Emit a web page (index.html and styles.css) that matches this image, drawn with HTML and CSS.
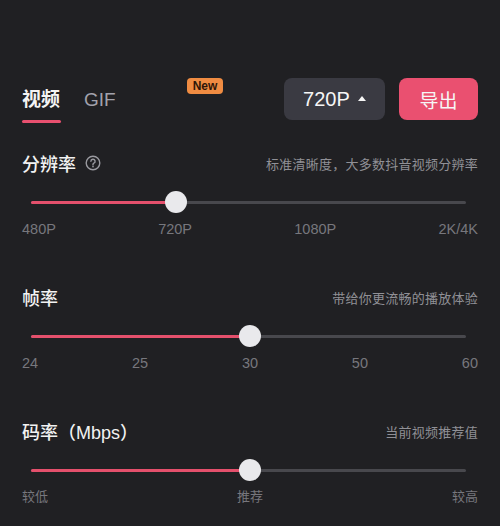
FILE: index.html
```html
<!DOCTYPE html>
<html lang="zh-CN">
<head>
    <meta charset="UTF-8">
    <meta name="viewport" content="width=device-width, initial-scale=1.0">
    <title>导出设置</title>
    <link rel="stylesheet" href="styles.css">
</head>
<body>
    <div class="topbar">
        <div class="tab active">视频</div>
        <div class="tab">GIF</div>
        <div class="badge">New</div>
        <button class="btn res-btn">720P <span class="caret"></span></button>
        <button class="btn export-btn">导出</button>
    </div>

    <div class="setting">
        <div class="setting-head">
            <div class="setting-title">分辨率
                <svg class="help" width="16" height="16" viewBox="0 0 16 16">
                    <circle cx="8" cy="8" r="6.8" fill="none" stroke="#9a9aa0" stroke-width="1.4"/>
                    <path d="M5.9 6.3a2.1 2.1 0 1 1 3 1.9c-.6.3-.9.7-.9 1.3v.4" fill="none" stroke="#9a9aa0" stroke-width="1.4" stroke-linecap="round"/>
                    <circle cx="8" cy="11.6" r="0.85" fill="#9a9aa0"/>
                </svg>
            </div>
            <div class="setting-desc">标准清晰度，大多数抖音视频分辨率</div>
        </div>
        <div class="slider">
            <div class="track">
                <div class="fill" style="width: 33.4%"></div>
                <div class="thumb" style="left: 33.4%"></div>
            </div>
        </div>
        <div class="ticks">
            <span>480P</span><span>720P</span><span>1080P</span><span>2K/4K</span>
        </div>
    </div>

    <div class="setting">
        <div class="setting-head">
            <div class="setting-title">帧率</div>
            <div class="setting-desc">带给你更流畅的播放体验</div>
        </div>
        <div class="slider">
            <div class="track">
                <div class="fill" style="width: 50.3%"></div>
                <div class="thumb" style="left: 50.3%"></div>
            </div>
        </div>
        <div class="ticks">
            <span>24</span><span>25</span><span>30</span><span>50</span><span>60</span>
        </div>
    </div>

    <div class="setting">
        <div class="setting-head">
            <div class="setting-title">码率（Mbps）</div>
            <div class="setting-desc">当前视频推荐值</div>
        </div>
        <div class="slider">
            <div class="track">
                <div class="fill" style="width: 50.3%"></div>
                <div class="thumb" style="left: 50.3%"></div>
            </div>
        </div>
        <div class="ticks cjk">
            <span>较低</span><span>推荐</span><span>较高</span>
        </div>
    </div>
</body>
</html>
```

FILE: styles.css
```css
body {
    margin: 0;
    padding: 0 22px;
    background-color: #202023;
    color: #f2f2f2;
    font-family: "Liberation Sans", "Noto Sans CJK SC", sans-serif;
}
.topbar {
    display: flex;
    align-items: flex-start;
    margin-top: 78px;
    height: 45px;
}
.tab {
    margin-top: 8px;
    font-size: 19px;
    line-height: 28px;
    font-weight: 500;
    color: #a2a2ac;
    margin-right: 23px;
}
.tab.active {
    color: #f4f4f4;
    font-weight: bold;
}
.tab.active::after {
    content: "";
    display: block;
    width: 39px;
    height: 3px;
    margin-top: 6px;
    border-radius: 2px;
    background-color: #e8506f;
}
.badge {
    margin-left: 48px;
    padding: 0 6px;
    height: 16px;
    line-height: 16px;
    border-radius: 4px;
    background-color: #f08c42;
    color: #2e1608;
    font-size: 12px;
    font-weight: bold;
}
.btn {
    height: 42px;
    border: none;
    border-radius: 8px;
    color: #f6f6f6;
    font-family: inherit;
    font-size: 19px;
    padding: 0;
}
.res-btn {
    margin-left: auto;
    width: 101px;
    background-color: #3a3a42;
    font-size: 20px;
}
.caret {
    display: inline-block;
    vertical-align: middle;
    margin-left: 3px;
    margin-top: -4px;
    border-left: 4px solid transparent;
    border-right: 4px solid transparent;
    border-bottom: 5px solid #f6f6f6;
}
.export-btn {
    margin-left: 14px;
    width: 79px;
    background-color: #ea5070;
}
.setting {
    margin-top: 26px;
    margin-bottom: 45px;
}
.setting + .setting {
    margin-top: 0;
}
.setting-head {
    display: flex;
    justify-content: space-between;
    align-items: center;
    height: 28px;
}
.setting-title {
    display: flex;
    align-items: center;
    font-size: 18px;
    font-weight: 500;
    color: #f2f2f2;
}
.help {
    margin-left: 9px;
}
.setting-desc {
    font-size: 13px;
    letter-spacing: 0.25px;
    color: #909096;
}
.slider {
    margin-top: 13px;
    height: 24px;
    padding: 0 12px 0 9px;
    display: flex;
    align-items: center;
}
.track {
    position: relative;
    flex: 1;
    height: 3px;
    border-radius: 2px;
    background-color: #48484d;
}
.fill {
    height: 3px;
    border-radius: 2px;
    background-color: #e4506c;
}
.thumb {
    position: absolute;
    top: -10px;
    width: 22px;
    height: 22px;
    margin-left: -11px;
    border-radius: 50%;
    background-color: #e9e9ec;
}
.ticks {
    margin-top: 6px;
    display: flex;
    justify-content: space-between;
    font-size: 14.5px;
    line-height: 18px;
    color: #77777d;
}
.ticks.cjk {
    font-size: 13px;
}
```
